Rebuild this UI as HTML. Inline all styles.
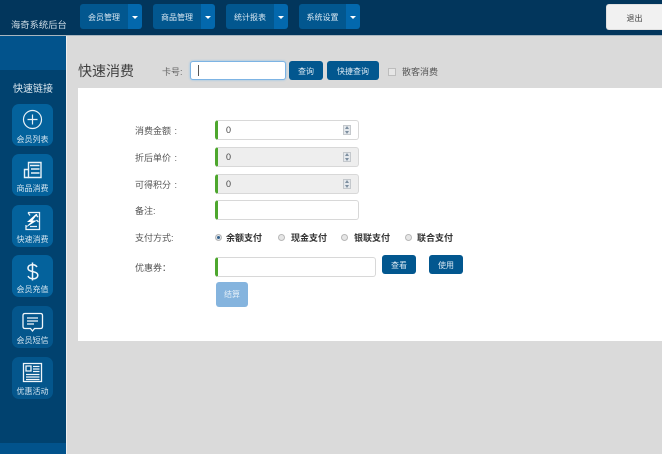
<!DOCTYPE html>
<html lang="zh"><head><meta charset="utf-8">
<style>
*{box-sizing:border-box}
html,body{margin:0;padding:0}
body{width:662px;height:454px;position:relative;overflow:hidden;background:#dadada;font-family:"Liberation Sans","Noto Sans CJK SC",sans-serif;color:#444}
.a{position:absolute}
.t{position:absolute;white-space:nowrap;line-height:14px}
.btn{position:absolute;background:#02578f;border-radius:3px;color:#dbe9f3;font-size:8px;line-height:27px;text-align:center}
.car{position:absolute;background:#0368ad;border-radius:0 3px 3px 0;width:14px;height:25px;top:4px}
.car:after{content:"";position:absolute;left:4px;top:12px;border:3px solid transparent;border-top:3px solid #fff;border-bottom:0}
.side{position:absolute;left:12px;width:41px;height:42px;background:#04629c;border-radius:7px}
.side span{position:absolute;left:0;right:0;top:29px;text-align:center;font-size:8px;line-height:12px;color:#d5e5f0;white-space:nowrap}
.side svg{position:absolute;left:0;top:0}
.lb{position:absolute;left:135px;font-size:9px;color:#555;line-height:14px;white-space:nowrap;word-spacing:1px}
.inp{position:absolute;left:215px;width:144px;height:20px;background:#fff;border:1px solid #d8d8d8;border-left:3px solid #4ea72e;border-radius:3px;font-size:9px;line-height:18px;padding-left:8px;color:#444}
.inp.d{background:#eeeeee}
.spin{position:absolute;right:7px;top:4px;width:8px;height:10px;background:#e4e8ec;border:1px solid #c4c8cc}
.spin:before{content:"";position:absolute;left:1px;top:0;border:2px solid transparent;border-bottom:3px solid #7d8fa0;border-top:0}
.spin:after{content:"";position:absolute;left:1px;bottom:0;border:2px solid transparent;border-top:3px solid #7d8fa0;border-bottom:0}
.rad{position:absolute;top:234px;width:7px;height:7px;border-radius:50%;background:#e6e6e6;border:1px solid #b8b8b8}
.rt{position:absolute;top:231px;font-size:9px;line-height:14px;font-weight:bold;color:#333;white-space:nowrap}
</style></head><body>
<div class="a" style="left:0;top:0;width:662px;height:35px;background:#02365c"></div>
<div class="a" style="left:0;top:35px;width:66px;height:419px;background:#01426f"></div>
<div class="a" style="left:0;top:35px;width:66px;height:35px;background:#02538c"></div>
<div class="a" style="left:0;top:443px;width:66px;height:11px;background:#02538c"></div>
<div class="a" style="left:66px;top:35px;width:1px;height:419px;background:#f0f0f0"></div>
<div class="a" style="left:0;top:35px;width:662px;height:1px;background:#a9b6bf"></div>
<div class="t" style="left:11px;top:18px;font-size:9.300px;color:#cfdde7">海奇系统后台</div>

<div class="btn" style="left:80px;top:4px;width:48px;height:25px;border-radius:3px 0 0 3px">会员管理</div><div class="car" style="left:128px"></div>
<div class="btn" style="left:153px;top:4px;width:48px;height:25px;border-radius:3px 0 0 3px">商品管理</div><div class="car" style="left:201px"></div>
<div class="btn" style="left:226px;top:4px;width:48px;height:25px;border-radius:3px 0 0 3px">统计报表</div><div class="car" style="left:274px"></div>
<div class="btn" style="left:299px;top:4px;width:47px;height:25px;border-radius:3px 0 0 3px">系统设置</div><div class="car" style="left:346px"></div>
<div class="a" style="left:606px;top:4px;width:56px;height:26px;background:#f1f1f1;border:1px solid #e0e0e0;border-right:0;border-radius:3px 0 0 3px;font-size:8px;line-height:27px;text-align:center;color:#444">退出</div>

<div class="t" style="left:13px;top:83px;font-size:10px;color:#dce8f0">快速链接</div>

<div class="side" style="top:104px"><svg width="41" height="30" fill="none" stroke="#e8f1f7" stroke-width="1.2"><circle cx="20.500" cy="15.500" r="9"/><path d="M20.500 10.500v10M15.500 15.500h10"/></svg><span style="top:30px">会员列表</span></div>
<div class="side" style="top:154px"><svg width="41" height="30" fill="none" stroke="#e8f1f7" stroke-width="1.400"><path d="M16.500 8.500h12.500v15H16.500zM18 11.500h9.500M19 15h8.500M19 19h8.500"/><path d="M16.500 15.500h-4v8h4"/></svg><span>商品消费</span></div>
<div class="side" style="top:205px"><svg width="41" height="30" fill="none" stroke="#e8f1f7" stroke-width="1.300"><path d="M16 7.500h11.500v17H14V20"/><path d="M16 7.500l2 3M24 10l2 2M24.500 15l2 2M18 21.500h7"/><path d="M24 9l-9 8h4l-6 6 12-7.500h-4.500l5-6.500z" fill="#fff" stroke="none"/></svg><span>快速消费</span></div>
<div class="side" style="top:255px"><svg style="top:1px" width="41" height="30" fill="none" stroke="#f0f6fa" stroke-width="1.5"><path d="M25 11c-.8-1.500-2.500-2.300-4.500-2.300-2.700 0-4.500 1.400-4.500 3.400 0 4.700 9.800 2.300 9.800 7.200 0 2.100-2 3.500-4.800 3.500-2.200 0-4.100-.9-5-2.700M20.500 6.500v18"/></svg><span>会员充值</span></div>
<div class="side" style="top:306px;background:#04568c"><svg width="41" height="30" fill="none" stroke="#f0f6fa" stroke-width="1.300"><path d="M13 7.500h15.500q2 0 2 2v11q0 2-2 2h-6l-2 2.500-2-2.500h-5.500q-2 0-2-2v-11q0-2 2-2z"/><path d="M15 12h11M15 15h11M15 18h7"/></svg><span>会员短信</span></div>
<div class="side" style="top:357px;background:#04568c"><svg width="41" height="30" fill="none" stroke="#f0f6fa" stroke-width="1.300"><path d="M11.500 6.500h18v18h-18z"/><path d="M14 9h5v5h-5z"/><path d="M21 9.500h6.500M21 12h6.500M21 14.500h6.500M14 17.500h13.500M14 20h13.500M14 22.500h13.500"/></svg><span>优惠活动</span></div>

<div class="t" style="left:78px;top:62px;font-size:14px;line-height:18px;color:#3f3f3f">快速消费</div>
<div class="t" style="left:162px;top:65px;font-size:9px;color:#666">卡号:</div>
<div class="a" style="left:190px;top:61px;width:96px;height:19px;background:#fff;border:1px solid #7db4e4;border-radius:3px;box-shadow:0 0 2px #8ec1ea"></div>
<div class="a" style="left:198px;top:65px;width:1px;height:11px;background:#555"></div>
<div class="btn" style="left:289px;top:61px;width:34px;height:19px;line-height:21px">查询</div>
<div class="btn" style="left:327px;top:61px;width:52px;height:19px;line-height:21px">快捷查询</div>
<div class="a" style="left:388px;top:68px;width:8px;height:8px;background:#e6e6e6;border:1px solid #bdbdbd"></div>
<div class="t" style="left:402px;top:65px;font-size:9px;color:#555">散客消费</div>

<div class="a" style="left:78px;top:88px;width:584px;height:253px;background:#fff"></div>

<div class="lb" style="top:124px">消费金额 :</div>
<div class="inp" style="top:120px">0<i class="spin"></i></div>
<div class="lb" style="top:151px">折后单价 :</div>
<div class="inp d" style="top:147px">0<i class="spin"></i></div>
<div class="lb" style="top:178px">可得积分 :</div>
<div class="inp d" style="top:174px">0<i class="spin"></i></div>
<div class="lb" style="top:204px">备注:</div>
<div class="inp" style="top:200px"></div>
<div class="lb" style="top:231px">支付方式:</div>
<div class="rad" style="left:215px;background:#31608c;box-shadow:inset 0 0 0 1px #eee"></div><div class="rt" style="left:226px">余额支付</div>
<div class="rad" style="left:278px"></div><div class="rt" style="left:291px">现金支付</div>
<div class="rad" style="left:341px"></div><div class="rt" style="left:354px">银联支付</div>
<div class="rad" style="left:405px"></div><div class="rt" style="left:417px">联合支付</div>
<div class="lb" style="top:261px">优惠券：</div>
<div class="inp" style="top:257px;width:161px"></div>
<div class="btn" style="left:382px;top:255px;width:34px;height:19px;line-height:21px">查看</div>
<div class="btn" style="left:429px;top:255px;width:34px;height:19px;line-height:21px">使用</div>
<div class="btn" style="left:216px;top:282px;width:32px;height:25px;line-height:25px;background:#85b4de;color:#e4eff8">结算</div>
</body></html>
